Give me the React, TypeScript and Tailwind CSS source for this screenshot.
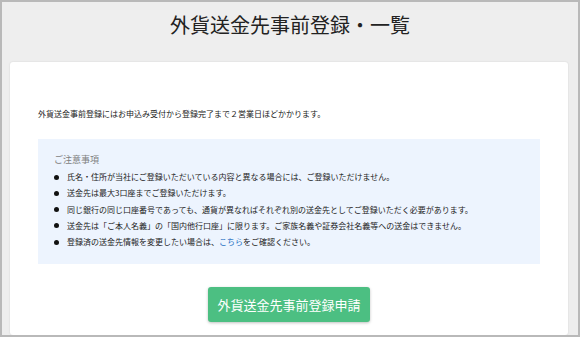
import React from "react";

const notes = [
  "氏名・住所が当社にご登録いただいている内容と異なる場合には、ご登録いただけません。",
  "送金先は最大3口座までご登録いただけます。",
  "同じ銀行の同じ口座番号であっても、通貨が異なればそれぞれ別の送金先としてご登録いただく必要があります。",
  "送金先は「ご本人名義」の「国内他行口座」に限ります。ご家族名義や証券会社名義等への送金はできません。",
];

export default function App() {
  return (
    <div
      className="w-[580px] h-[337px] overflow-hidden border-2 border-[#b9b9b9] bg-[#eeeeee] flex flex-col"
      style={{ fontFamily: '"Noto Sans CJK JP", "Noto Sans", sans-serif' }}
    >
      <div className="h-[60px] shrink-0 flex justify-center pt-[10px]">
        <h1 className="text-[20px] leading-[26px] text-[#222]">外貨送金先事前登録・一覧</h1>
      </div>

      <div className="ml-2 mr-[10px] flex-1 bg-white rounded-[3px] shadow-[0_0_2px_rgba(0,0,0,0.12)] px-[28px] pt-[46px]">
        <p className="text-[8px] leading-[12px] text-[#222]">
          外貨送金事前登録にはお申込み受付から登録完了まで２営業日ほどかかります。
        </p>

        <div className="mt-[19px] bg-[#edf4fe] px-4 pt-[14px] pb-[14px]">
          <h2 className="text-[9px] leading-[13px] text-[#7f7f7f]">ご注意事項</h2>
          <ul className="mt-[3px]">
            {notes.map((n) => (
              <li key={n} className="flex items-center gap-2 text-[8px] leading-[16.25px] text-[#222]">
                <span className="w-[5px] h-[5px] rounded-full bg-[#111] shrink-0" />
                <span>{n}</span>
              </li>
            ))}
            <li className="flex items-center gap-2 text-[8px] leading-[16.25px] text-[#222]">
              <span className="w-[5px] h-[5px] rounded-full bg-[#111] shrink-0" />
              <span>
                登録済の送金先情報を変更したい場合は、
                <a className="text-[#1f6fc2]">こちら</a>
                をご確認ください。
              </span>
            </li>
          </ul>
        </div>

        <div className="flex justify-center mt-[23px]">
          <button className="w-[162px] h-[35px] rounded-[3px] bg-[#4cbf82] text-white text-[13px] shadow-[0_1px_3px_rgba(0,0,0,0.25)]">
            外貨送金先事前登録申請
          </button>
        </div>
      </div>
    </div>
  );
}
